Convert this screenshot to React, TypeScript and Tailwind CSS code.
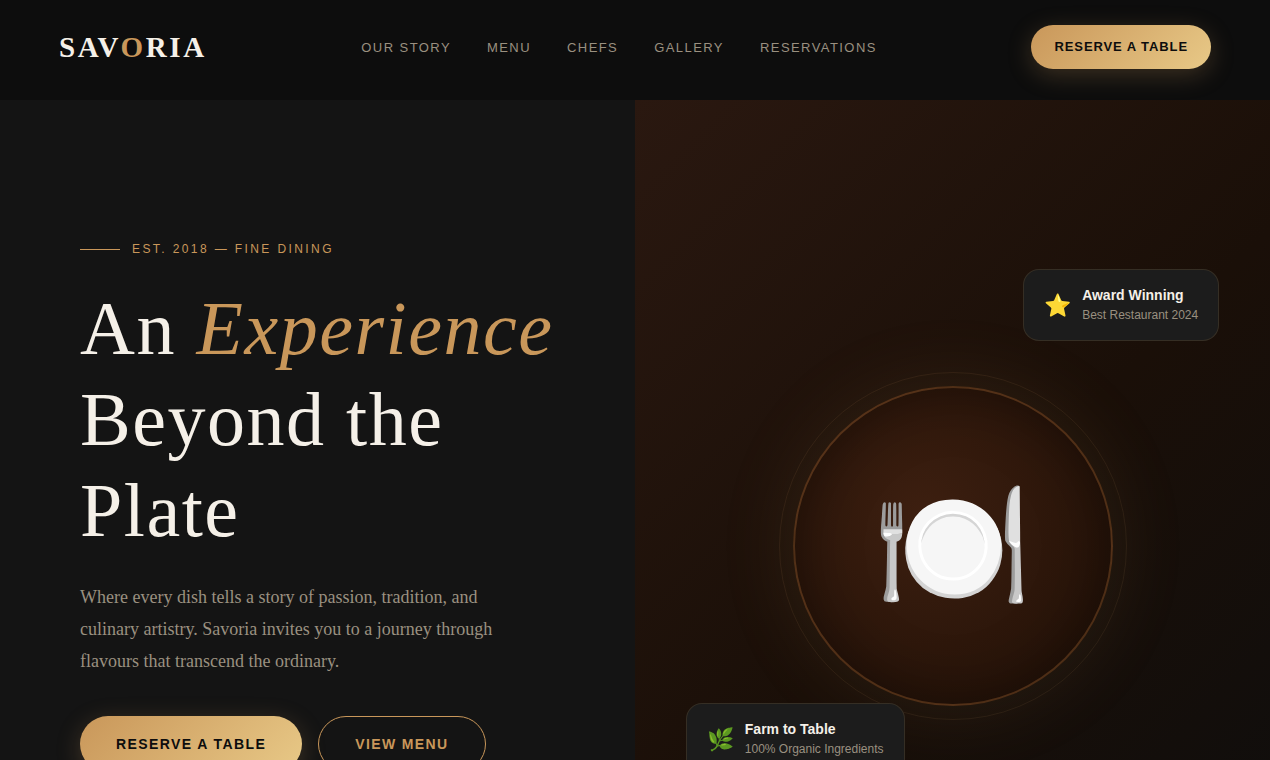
import { ReactNode } from 'react';

const SANS = "font-['Liberation_Sans',Arial,sans-serif]";
const SERIF = "font-['Liberation_Serif','Times_New_Roman',serif]";

const links = [
  { label: 'Our Story', href: '#story' },
  { label: 'Menu', href: '#menu' },
  { label: 'Chefs', href: '#chefs' },
  { label: 'Gallery', href: '#gallery' },
  { label: 'Reservations', href: '#reservations' },
];

function Header() {
  return (
    <header className="h-[100px] bg-[#0d0d0d]">
      <div className="max-w-[1200px] mx-auto px-6 pt-[25px] flex items-center justify-between">
        <a href="#" className={`${SERIF} text-[29px] leading-[44px] font-bold tracking-[0.09em] text-[#f5f0e8]`}>
          SAV<span className="text-[#c9975a]">O</span>RIA
        </a>
        <nav className="flex gap-9">
          {links.map(link => (
            <a key={link.href} href={link.href} className="text-[13px] leading-[21px] uppercase tracking-[0.11em] text-[#9a9080]">
              {link.label}
            </a>
          ))}
        </nav>
        <button className="h-11 px-[23px] rounded-full bg-linear-135 from-[#c9975a] to-[#e8c987] text-[13px] font-bold uppercase tracking-[0.07em] text-[#0d0d0d] shadow-[0_6px_24px_rgba(201,151,90,0.25)]">
          Reserve a Table
        </button>
      </div>
    </header>
  );
}

type BadgeProps = {
  icon: ReactNode;
  title: string;
  text: string;
  className: string;
};

function Badge({ icon, title, text, className }: BadgeProps) {
  return (
    <div className={`absolute flex items-center gap-[11px] h-[72px] px-5 rounded-2xl bg-[#1c1c1c] border border-[#c9975a]/15 ${className}`}>
      <span className="text-[22px]">{icon}</span>
      <div>
        <div className="text-sm leading-5 font-bold text-[#f5f0e8]">{title}</div>
        <div className="text-xs leading-5 text-[#9a9080]">{text}</div>
      </div>
    </div>
  );
}

export default function App() {
  return (
    <div className={`${SANS} bg-[#0d0d0d] text-[#f5f0e8]`}>
      <Header />
      <main className="grid grid-cols-2 min-h-[892px]">
        <section className="bg-[#141414] pl-20 pr-[60px] pt-[139px]">
          <p className="flex items-center gap-3 text-xs leading-5 uppercase tracking-[0.2em] text-[#c9975a]">
            <span className="w-10 h-px bg-[#c9975a]" />
            Est. 2018 — Fine Dining
          </p>
          <h1 className={`${SERIF} mt-6 text-[76px] leading-[91px] tracking-[0.02em]`}>
            An <em className="text-[#c9975a]">Experience</em>
            <br />
            Beyond the
            <br />
            Plate
          </h1>
          <p className={`${SERIF} mt-[25px] max-w-[420px] text-lg leading-8 text-[#9a9080]`}>
            Where every dish tells a story of passion, tradition, and culinary artistry. Savoria
            invites you to a journey through flavours that transcend the ordinary.
          </p>
          <div className="mt-[39px] flex gap-4">
            <button className="h-14 px-9 rounded-full bg-linear-135 from-[#c9975a] to-[#e8c987] text-sm font-bold uppercase tracking-[0.1em] text-[#0d0d0d] shadow-[0_6px_24px_rgba(201,151,90,0.25)]">
              Reserve a Table
            </button>
            <button className="h-14 px-9 rounded-full border border-[#c9975a] text-sm font-bold uppercase tracking-[0.1em] text-[#c9975a]">
              View Menu
            </button>
          </div>
        </section>

        <section className="relative flex items-center justify-center overflow-hidden bg-linear-135 from-[#2a1810] via-[#1a0f08] to-[#0d0d0d]">
          <div className="rounded-full p-[13px] border border-[#c9975a]/10">
            <div className="size-80 rounded-full border-2 border-[#c9803f]/25 flex items-center justify-center bg-[radial-gradient(circle_at_40%_40%,#3d1f10,#1e0f06)] shadow-[0_0_80px_rgba(201,151,90,0.12),inset_0_0_60px_rgba(0,0,0,0.4)]">
              <span className="text-[129px] leading-none">🍽️</span>
            </div>
          </div>
          <Badge icon="⭐" title="Award Winning" text="Best Restaurant 2024" className="top-[169px] right-[8%]" />
          <Badge icon="🌿" title="Farm to Table" text="100% Organic Ingredients" className="top-[603px] left-[8%]" />
        </section>
      </main>
    </div>
  );
}
